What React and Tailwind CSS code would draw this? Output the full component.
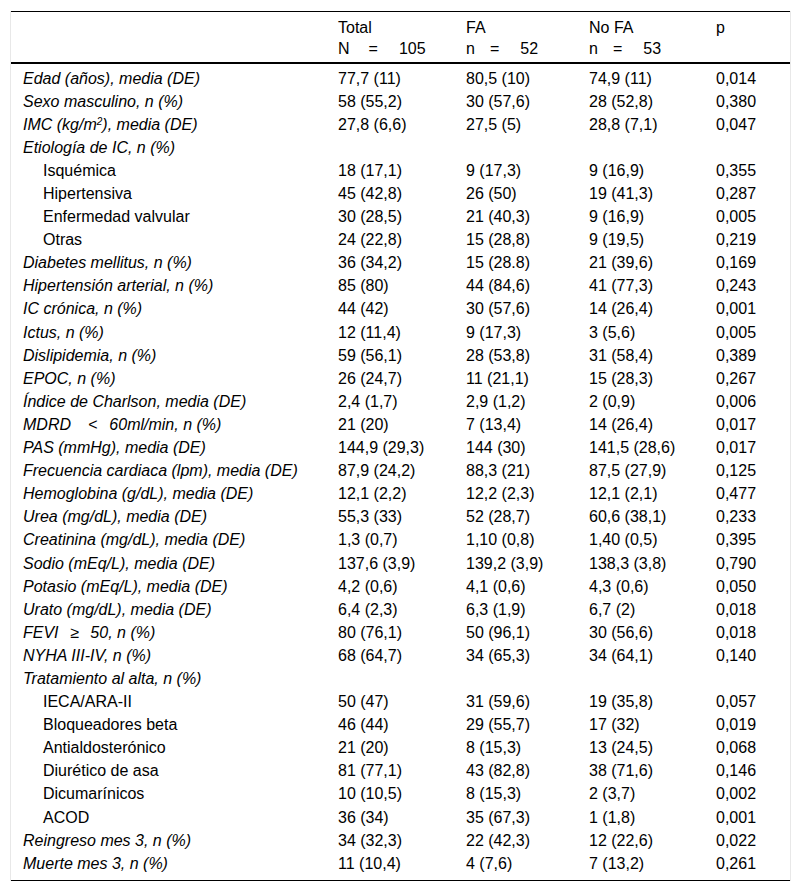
import React from "react";

const rows = [
  { label: "Edad (años), media (DE)", it: true, v: ["77,7 (11)", "80,5 (10)", "74,9 (11)", "0,014"] },
  { label: "Sexo masculino, n (%)", it: true, v: ["58 (55,2)", "30 (57,6)", "28 (52,8)", "0,380"] },
  {
    label: (
      <>
        IMC (kg/m<sup className="text-[10px]">2</sup>), media (DE)
      </>
    ),
    it: true,
    v: ["27,8 (6,6)", "27,5 (5)", "28,8 (7,1)", "0,047"],
  },
  { label: "Etiología de IC, n (%)", it: true, v: ["", "", "", ""] },
  { label: "Isquémica", sub: true, v: ["18 (17,1)", "9 (17,3)", "9 (16,9)", "0,355"] },
  { label: "Hipertensiva", sub: true, v: ["45 (42,8)", "26 (50)", "19 (41,3)", "0,287"] },
  { label: "Enfermedad valvular", sub: true, v: ["30 (28,5)", "21 (40,3)", "9 (16,9)", "0,005"] },
  { label: "Otras", sub: true, v: ["24 (22,8)", "15 (28,8)", "9 (19,5)", "0,219"] },
  { label: "Diabetes mellitus, n (%)", it: true, v: ["36 (34,2)", "15 (28.8)", "21 (39,6)", "0,169"] },
  { label: "Hipertensión arterial, n (%)", it: true, v: ["85 (80)", "44 (84,6)", "41 (77,3)", "0,243"] },
  { label: "IC crónica, n (%)", it: true, v: ["44 (42)", "30 (57,6)", "14 (26,4)", "0,001"] },
  { label: "Ictus, n (%)", it: true, v: ["12 (11,4)", "9 (17,3)", "3 (5,6)", "0,005"] },
  { label: "Dislipidemia, n (%)", it: true, v: ["59 (56,1)", "28 (53,8)", "31 (58,4)", "0,389"] },
  { label: "EPOC, n (%)", it: true, v: ["26 (24,7)", "11 (21,1)", "15 (28,3)", "0,267"] },
  { label: "Índice de Charlson, media (DE)", it: true, v: ["2,4 (1,7)", "2,9 (1,2)", "2 (0,9)", "0,006"] },
  {
    label: (
      <>
        MDRD<span className="ml-[17px]">&lt;</span>
        <span className="ml-[12px]">60ml/min, n (%)</span>
      </>
    ),
    it: true,
    v: ["21 (20)", "7 (13,4)", "14 (26,4)", "0,017"],
  },
  { label: "PAS (mmHg), media (DE)", it: true, v: ["144,9 (29,3)", "144 (30)", "141,5 (28,6)", "0,017"] },
  { label: "Frecuencia cardiaca (lpm), media (DE)", it: true, v: ["87,9 (24,2)", "88,3 (21)", "87,5 (27,9)", "0,125"] },
  { label: "Hemoglobina (g/dL), media (DE)", it: true, v: ["12,1 (2,2)", "12,2 (2,3)", "12,1 (2,1)", "0,477"] },
  { label: "Urea (mg/dL), media (DE)", it: true, v: ["55,3 (33)", "52 (28,7)", "60,6 (38,1)", "0,233"] },
  { label: "Creatinina (mg/dL), media (DE)", it: true, v: ["1,3 (0,7)", "1,10 (0,8)", "1,40 (0,5)", "0,395"] },
  { label: "Sodio (mEq/L), media (DE)", it: true, v: ["137,6 (3,9)", "139,2 (3,9)", "138,3 (3,8)", "0,790"] },
  { label: "Potasio (mEq/L), media (DE)", it: true, v: ["4,2 (0,6)", "4,1 (0,6)", "4,3 (0,6)", "0,050"] },
  { label: "Urato (mg/dL), media (DE)", it: true, v: ["6,4 (2,3)", "6,3 (1,9)", "6,7 (2)", "0,018"] },
  {
    label: (
      <>
        FEVI<span className="ml-[12px]">≥</span>
        <span className="ml-[11px]">50, n (%)</span>
      </>
    ),
    it: true,
    v: ["80 (76,1)", "50 (96,1)", "30 (56,6)", "0,018"],
  },
  { label: "NYHA III-IV, n (%)", it: true, v: ["68 (64,7)", "34 (65,3)", "34 (64,1)", "0,140"] },
  { label: "Tratamiento al alta, n (%)", it: true, v: ["", "", "", ""] },
  { label: "IECA/ARA-II", sub: true, v: ["50 (47)", "31 (59,6)", "19 (35,8)", "0,057"] },
  { label: "Bloqueadores beta", sub: true, v: ["46 (44)", "29 (55,7)", "17 (32)", "0,019"] },
  { label: "Antialdosterónico", sub: true, v: ["21 (20)", "8 (15,3)", "13 (24,5)", "0,068"] },
  { label: "Diurético de asa", sub: true, v: ["81 (77,1)", "43 (82,8)", "38 (71,6)", "0,146"] },
  { label: "Dicumarínicos", sub: true, v: ["10 (10,5)", "8 (15,3)", "2 (3,7)", "0,002"] },
  { label: "ACOD", sub: true, v: ["36 (34)", "35 (67,3)", "1 (1,8)", "0,001"] },
  { label: "Reingreso mes 3, n (%)", it: true, v: ["34 (32,3)", "22 (42,3)", "12 (22,6)", "0,022"] },
  { label: "Muerte mes 3, n (%)", it: true, v: ["11 (10,4)", "4 (7,6)", "7 (13,2)", "0,261"] },
];

const cols = "grid grid-cols-[315px_128px_123px_127px_88px]";

const Count = ({ k, eq, n }) => (
  <div className="flex">
    <span>{k}</span>
    <span className={eq}>=</span>
    <span className="ml-[21px]">{n}</span>
  </div>
);

export default function App() {
  return (
    <div
      className="bg-white text-black text-[16px] pt-[11px]"
      style={{ fontFamily: '"Liberation Sans", Arial, sans-serif' }}
    >
      <div className="ml-[10px] w-[781px] border-x border-[#e8e8e8]">
        <div className={`${cols} border-t border-black border-b-2 h-[53px] leading-[21px] pt-[5px]`}>
          <div />
          <div className="pl-[12px]">
            <div>Total</div>
            <Count k="N" eq="ml-[19px]" n="105" />
          </div>
          <div className="pl-[12px]">
            <div>FA</div>
            <Count k="n" eq="ml-[15px]" n="52" />
          </div>
          <div className="pl-[12px]">
            <div>No FA</div>
            <Count k="n" eq="ml-[15px]" n="53" />
          </div>
          <div className="pl-[12px]">p</div>
        </div>
        <div className="pt-[3px] pb-[5px] border-b border-black">
          {rows.map((r, i) => (
            <div key={i} className={`${cols} h-[23.1px] items-center leading-none`}>
              <div className={`${r.sub ? "pl-[32px]" : "pl-[12px]"} ${r.it ? "italic" : ""}`}>{r.label}</div>
              {r.v.map((x, j) => (
                <div key={j} className="pl-[12px]">
                  {x}
                </div>
              ))}
            </div>
          ))}
        </div>
      </div>
    </div>
  );
}
